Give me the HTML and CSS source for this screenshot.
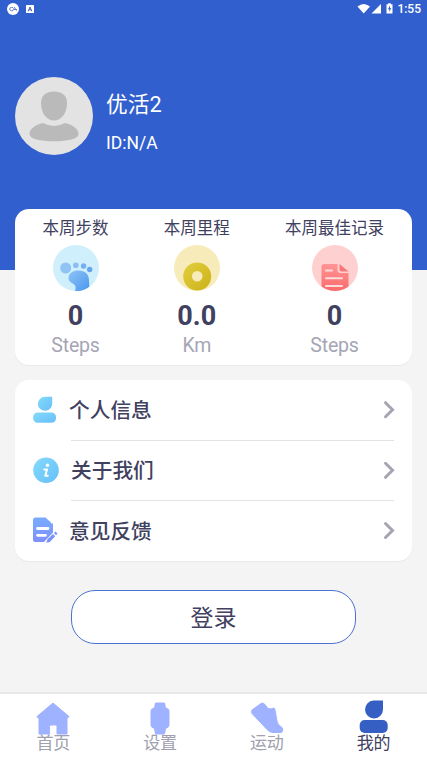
FILE: index.html
```
<!DOCTYPE html>
<html lang="zh-CN">
<head>
<meta charset="utf-8">
<meta name="viewport" content="width=device-width, initial-scale=1">
<title>我的</title>
<link rel="stylesheet" href="styles.css">
</head>
<body>
<div class="app">
  <header class="hero">
    <div class="status">
      <svg class="status-apps" viewBox="0 0 30 14">
        <circle cx="6" cy="7" r="6" fill="#fff"/>
        <path d="M6 5.5H4.2Q2.7 5.5 2.7 7T4.2 8.7H6M5.7 8.7L7.5 5.3L9.5 8.7M6.5 7.5H10" fill="none" stroke="#6e83d8" stroke-width="1"/>
        <rect x="19" y="3" width="8" height="8" rx=".6" fill="#fff"/>
        <path d="M21.2 9.3L23 5L24.8 9.3M21.8 7.8H24.2" fill="none" stroke="#4c62a8" stroke-width="1"/>
      </svg>
      <div class="status-right">
        <svg class="status-icons" viewBox="0 0 38 14">
          <path d="M.5 4.500Q6.500 -.5 13 4.500L6.700 11.500Z" fill="#fff"/>
          <path d="M14.500 11.500H24V2Z" fill="#fff"/>
          <path d="M31.200 2.300V1.200H33.800V2.300H35.500V11.500H29.500V2.300Z" fill="#fff"/>
          <path d="M33 3.600L30.900 7.200H32.300V10L34.300 6.200H33Z" fill="#315fce"/>
        </svg>
        <span>1:55</span>
      </div>
    </div>
    <div class="profile">
      <svg class="avatar" viewBox="0 0 78 78">
        <circle cx="39" cy="39" r="39" fill="#e3e3e3"/>
        <path d="M39 14.500C47 14.500 52 18.500 52 26C52 36 46.500 43.500 39 43.500S26 36 26 26C26 18.500 31 14.500 39 14.500Z" fill="#bababa"/>
        <path d="M28 46Q39 52 50 46C58 48 63.500 52 63.500 57C63.500 62 53 64.300 39 64.300S14.500 62 14.500 57C14.500 52 20 48 28 46Z" fill="#bababa"/>
      </svg>
      <div class="identity">
        <div class="name">优活2</div>
        <div class="uid">ID:N/A</div>
      </div>
    </div>
  </header>

  <main class="content">
    <section class="card stats">
      <div class="stat">
        <div class="stat-title">本周步数</div>
        <svg class="stat-icon" viewBox="0 0 46 46">
          <defs><linearGradient id="foot" x1="0" y1="0" x2="1" y2="1"><stop offset="0" stop-color="#8fc5f5"/><stop offset="1" stop-color="#4996f0"/></linearGradient></defs>
          <circle cx="23" cy="23" r="23" fill="#d0effc"/>
          <circle cx="12.700" cy="23" r="5.500" fill="#8fc3f3"/>
          <circle cx="22.800" cy="20.300" r="2.800" fill="#8abdf2"/>
          <circle cx="30.600" cy="21" r="2.700" fill="#76aff0"/>
          <circle cx="36.700" cy="24.500" r="2.700" fill="#67a2ec"/>
          <path d="M15.500 33C15.500 28 20 25.500 25.500 25.500C32 25.500 35.500 29 36 35L36.300 41.700Q30 46.500 22 46C23 43 23 40.500 20.500 39C17.500 37.500 15.500 36 15.500 33Z" fill="url(#foot)"/>
        </svg>
        <div class="stat-value">0</div>
        <div class="stat-unit">Steps</div>
      </div>
      <div class="stat">
        <div class="stat-title">本周里程</div>
        <svg class="stat-icon" viewBox="0 0 46 46">
          <defs>
            <linearGradient id="ring" x1="0" y1="0" x2="1" y2="1"><stop offset="0" stop-color="#e2cf3f"/><stop offset="1" stop-color="#cbb119"/></linearGradient>
            <clipPath id="disc"><circle cx="23" cy="23" r="23"/></clipPath>
          </defs>
          <circle cx="23" cy="23" r="23" fill="#f8ebba"/>
          <g clip-path="url(#disc)"><circle cx="23.200" cy="31.500" r="14" fill="url(#ring)"/></g>
          <circle cx="23.200" cy="31.300" r="5.300" fill="#f8ebba"/>
        </svg>
        <div class="stat-value">0.0</div>
        <div class="stat-unit">Km</div>
      </div>
      <div class="stat">
        <div class="stat-title">本周最佳记录</div>
        <svg class="stat-icon" viewBox="0 0 46 46">
          <defs><linearGradient id="note" x1="0" y1="0" x2="0" y2="1"><stop offset="0" stop-color="#ff9494"/><stop offset="1" stop-color="#fa6b6c"/></linearGradient></defs>
          <circle cx="23" cy="23" r="23" fill="#ffd0d0"/>
          <g clip-path="url(#disc)">
            <path d="M12 19H25.500V25Q25.500 28 28.500 28H36.500V46H9.500V21.500Q9.500 19 12 19Z" fill="url(#note)"/>
            <path d="M27.500 19L36.500 26.500H29.500Q27.500 26.500 27.500 24.500Z" fill="#fa7778"/>
            <path d="M14 25.500H20M14 33.200H30M14 41H30" stroke="#ffdcdc" stroke-width="2" stroke-linecap="round"/>
          </g>
        </svg>
        <div class="stat-value">0</div>
        <div class="stat-unit">Steps</div>
      </div>
    </section>

    <nav class="card menu">
      <a class="row">
        <svg class="row-icon" viewBox="0 0 28 28">
          <defs><linearGradient id="sky" x1="0" y1="0" x2="1" y2="1"><stop offset="0" stop-color="#84dafb"/><stop offset="1" stop-color="#67bff9"/></linearGradient></defs>
          <path d="M12 .8H19.200V7.500A7.200 7 0 1 1 12 .8Z" fill="url(#sky)"/>
          <rect x=".2" y="16.500" width="22.800" height="10.300" rx="4.500" fill="url(#sky)"/>
        </svg>
        <span class="row-label">个人信息</span>
        <svg class="chevron" viewBox="0 0 12 20"><path d="M2.500 2.700L9.500 9.700L2.500 16.700"/></svg>
      </a>
      <a class="row">
        <svg class="row-icon" viewBox="0 0 28 28">
          <circle cx="13" cy="13.200" r="12.800" fill="url(#sky)"/>
          <circle cx="14.500" cy="8.300" r="1.700" fill="#fff"/>
          <path d="M11.300 12.500H14L12.300 18.700H14.800" fill="none" stroke="#fff" stroke-width="2" stroke-linecap="round" stroke-linejoin="round"/>
        </svg>
        <span class="row-label row-label-inset">关于我们</span>
        <svg class="chevron" viewBox="0 0 12 20"><path d="M2.500 2.300L9.500 9.300L2.500 16.300"/></svg>
      </a>
      <a class="row">
        <svg class="row-icon" viewBox="0 0 28 28">
          <defs><linearGradient id="violet" x1="0" y1="0" x2="0" y2="1"><stop offset="0" stop-color="#79acff"/><stop offset="1" stop-color="#7e8ffb"/></linearGradient></defs>
          <path d="M2.500 .5H13Q13 6.500 15.500 6.500H20V15.500L11 25H2.500Q0 25 0 22.500V3Q0 .5 2.500 .5ZM12.500 .5L18 5.500V7H12.500Z" fill="url(#violet)"/>
          <path d="M4.500 11.500H15M4.500 18.300H12.500" stroke="#fff" stroke-width="2.800" stroke-linecap="round"/>
          <path d="M13.300 25.800L14.500 22.300L20 17L22.200 19.200L16.800 25ZM21 16L22.500 14.500L24.500 16.500L23 18.200Z" fill="#7894fc"/>
        </svg>
        <span class="row-label">意见反馈</span>
        <svg class="chevron" viewBox="0 0 12 20"><path d="M2.500 2.500L9.500 9.500L2.500 16.500"/></svg>
      </a>
    </nav>

    <button class="login">登录</button>
  </main>

  <footer class="tabs">
    <a class="tab">
      <svg class="tab-icon" viewBox="0 0 34 34"><path d="M17 2L33 15.500L31.500 17H31V33H21V25.500Q21 24 19.500 24H15Q13.500 24 13.500 25.500V33H3V17H2L1 15.500Z" fill="#9fb2ff" stroke="#9fb2ff" stroke-linejoin="round"/></svg>
      <span>首页</span>
    </a>
    <a class="tab">
      <svg class="tab-icon" viewBox="0 0 34 34"><path d="M12.500 2H21.500L22.500 7Q26 7.500 26 10V24Q26 26.500 22.500 27.500L21.500 33H12.500L11.500 27.500Q8 26.500 8 24V10Q8 7.500 11.500 7Z" fill="#9fb2ff" stroke="#9fb2ff" stroke-linejoin="round"/></svg>
      <span>设置</span>
    </a>
    <a class="tab">
      <svg class="tab-icon" viewBox="0 0 34 34"><path d="M2 9L11 2.500Q13 1.500 14.500 3L18 7.500Q21 8.500 24 7Q25 7.500 25 9L27 20Q27.500 24 32 26.500Q34 29 31.500 31.500H23Q20 31.500 17 28.500L2 12.500Q1 10.500 2 9Z" fill="#9fb2ff" stroke="#9fb2ff" stroke-linejoin="round"/></svg>
      <span>运动</span>
    </a>
    <a class="tab active">
      <svg class="tab-icon" viewBox="0 0 34 34"><path d="M16.500 -.5H26V8.500A9 9 0 1 1 16.500 -.5Z" fill="#355fc3"/><rect x="2.700" y="19" width="28" height="13" rx="5" fill="#355fc3"/></svg>
      <span>我的</span>
    </a>
  </footer>
</div>
</body>
</html>
```
FILE: styles.css
```
* { box-sizing: border-box; }

body {
  margin: 0;
  background: #f4f4f4;
  color: #40405f;
  font-family: Roboto, "Noto Sans CJK SC", sans-serif;
}

svg { display: block; flex: none; }

.app {
  display: flex;
  flex-direction: column;
  width: 427px;
  height: 760px;
  overflow: hidden;
}

.hero {
  flex: none;
  height: 269.5px;
  background: #315fce;
  color: #fff;
}

.status {
  display: flex;
  justify-content: space-between;
  height: 20px;
  padding: 2px 6px 0 7px;
  font-size: 12px;
  font-weight: 500;
  line-height: 15px;
}

.status-apps { width: 30px; height: 14px; }
.status-right { display: flex; gap: 2px; }
.status-icons { width: 38px; height: 14px; }

.profile {
  display: flex;
  gap: 13px;
  padding: 57px 15px 0;
}

.avatar { width: 78px; height: 78px; }
.identity { padding-top: 12px; }
.name { font-size: 21.7px; line-height: 32px; }
.uid { margin-top: 10px; font-size: 17.5px; line-height: 24px; }

.content {
  display: flex;
  flex: 1;
  flex-direction: column;
  margin-top: -60.5px;
  padding: 0 15px;
}

.card {
  background: #fff;
  border-radius: 14px;
  box-shadow: 0 1px 1px rgba(0, 0, 0, .05);
}

.stats {
  display: flex;
  justify-content: space-between;
  height: 156px;
  padding: 8px 28px 0 27.5px;
}

.stat {
  display: flex;
  flex-direction: column;
  align-items: center;
}

.stat-title { font-size: 16.5px; line-height: 24px; }
.stat-icon { width: 46px; height: 46px; margin-top: 4px; }
.stat-value { margin-top: 9px; font-size: 27px; font-weight: 700; line-height: 32px; }
.stat-unit { margin-top: 2px; font-size: 19.5px; line-height: 24px; letter-spacing: -.2px; color: #a5a5b4; }

.menu {
  height: 181px;
  margin-top: 15px;
  padding: 0 17px;
}

.row {
  display: flex;
  align-items: center;
  height: 60.5px;
  background: linear-gradient(#e2e2e4, #e2e2e4) 39px 100% / 323px 1px no-repeat;
}

.row:last-child { background: none; }
.row-icon { width: 28px; height: 28px; margin-left: .5px; }

.row-label {
  flex: 1;
  margin-left: 8.5px;
  padding-top: 2px;
  font-size: 20.7px;
  font-weight: 500;
  line-height: 30px;
}

.row-label-inset { margin-left: 10.5px; padding-top: 1px; }
.chevron { width: 12px; height: 20px; }
.chevron path { fill: none; stroke: #a5a5b2; stroke-width: 3; stroke-linecap: round; }

.login {
  align-self: center;
  width: 285px;
  height: 54px;
  margin-top: 29px;
  padding: 3px 0 0;
  border: 1.5px solid #4c72cf;
  border-radius: 24px;
  background: #fff;
  color: inherit;
  font: 23px/50px Roboto, "Noto Sans CJK SC", sans-serif;
}

.tabs {
  display: flex;
  flex: none;
  height: 68px;
  border-top: 2px solid #e7e7e7;
  background: #fff;
  color: #a0a0ae;
}

.tab {
  display: flex;
  flex: 1;
  flex-direction: column;
  align-items: center;
  padding-top: 7px;
  font-size: 17px;
  line-height: 24px;
}

.tab-icon { width: 34px; height: 34px; overflow: visible; }
.tab span { z-index: 1; margin-top: -4.5px; }
.active { color: #40405f; }
```
